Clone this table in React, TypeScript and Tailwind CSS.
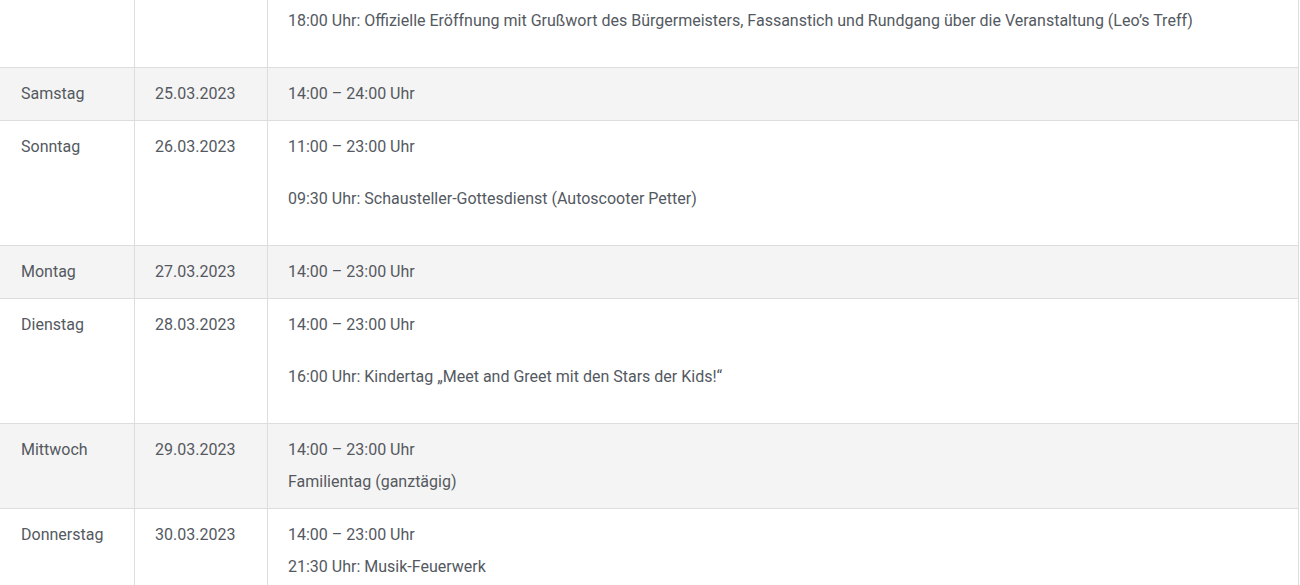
const ROWS = [
  { day: "Samstag", date: "25.03.2023", blocks: [["14:00 – 24:00 Uhr"]] },
  {
    day: "Sonntag",
    date: "26.03.2023",
    blocks: [["11:00 – 23:00 Uhr"], ["09:30 Uhr: Schausteller-Gottesdienst (Autoscooter Petter)"]],
    tail: true,
  },
  { day: "Montag", date: "27.03.2023", blocks: [["14:00 – 23:00 Uhr"]] },
  {
    day: "Dienstag",
    date: "28.03.2023",
    blocks: [["14:00 – 23:00 Uhr"], ["16:00 Uhr: Kindertag „Meet and Greet mit den Stars der Kids!“"]],
    tail: true,
  },
  { day: "Mittwoch", date: "29.03.2023", blocks: [["14:00 – 23:00 Uhr", "Familientag (ganztägig)"]] },
  { day: "Donnerstag", date: "30.03.2023", blocks: [["14:00 – 23:00 Uhr", "21:30 Uhr: Musik-Feuerwerk"]] },
];

export default function App() {
  return (
    <div className="w-[1300px] h-[585px] overflow-hidden bg-white">
      <div
        className="w-[1299px] text-[16px] leading-[32px] text-[#54595f]"
        style={{ fontFamily: "Roboto, 'Liberation Sans', sans-serif" }}
      >
        {/* continued row from above (Freitag) */}
        <div className="flex bg-white">
          <div className="w-[135px] shrink-0 border-r border-[#dddddd]" />
          <div className="w-[133px] shrink-0 border-r border-[#dddddd]" />
          <div className="w-[1031px] shrink-0 border-r border-[#dddddd] px-5 pt-[5px] pb-[10px]">
            <p className="mb-5">
              18:00 Uhr: Offizielle Eröffnung mit Grußwort des Bürgermeisters, Fassanstich und Rundgang über die
              Veranstaltung (Leo’s Treff)
            </p>
          </div>
        </div>
        {ROWS.map((row, i) => (
          <div
            key={i}
            className={`flex border-t border-[#dddddd] ${i % 2 === 0 ? "bg-[#f4f4f4]" : "bg-white"}`}
          >
            <div className="w-[135px] shrink-0 border-r border-[#dddddd] pl-[21px] pr-5 py-[10px]">{row.day}</div>
            <div className="w-[133px] shrink-0 border-r border-[#dddddd] px-5 py-[10px]">{row.date}</div>
            <div className="w-[1031px] shrink-0 border-r border-[#dddddd] px-5 py-[10px]">
              {row.blocks.map((lines, j) => (
                <p key={j} className={j < row.blocks.length - 1 || row.tail ? "mb-5" : ""}>
                  {lines.map((l, k) => (
                    <span key={k}>
                      {k > 0 && <br />}
                      {l}
                    </span>
                  ))}
                </p>
              ))}
            </div>
          </div>
        ))}
      </div>
    </div>
  );
}
